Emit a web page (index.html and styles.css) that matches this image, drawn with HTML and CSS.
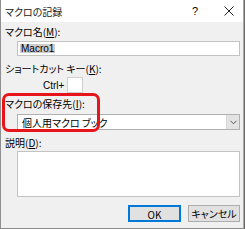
FILE: index.html
```html
<!DOCTYPE html>
<html lang="ja">
<head>
    <meta charset="UTF-8">
    <title>マクロの記録</title>
    <link rel="stylesheet" href="styles.css">
</head>
<body>
    <div class="window">
        <div class="titlebar">
            <span class="title">マクロの記録</span>
            <span class="help">?</span>
            <span class="close">
                <svg width="10" height="10" viewBox="0 0 10 10"><path d="M0.5 0.5L9.5 9.5M9.5 0.5L0.5 9.5" stroke="#222" stroke-width="1" fill="none"/></svg>
            </span>
        </div>
        <div class="content">
            <div class="label first">マクロ名(<u>M</u>):</div>
            <div class="textbox name"><span class="sel">Macro1</span></div>

            <div class="label second">ショートカット キー(<u>K</u>):</div>
            <div class="shortcut">
                <span class="ctrl">Ctrl+</span>
                <div class="keybox"></div>
            </div>

            <div class="label third">マクロの保存先(<u>I</u>):</div>
            <div class="combo">
                <span class="combo-text">個人用マクロ ブック</span>
                <span class="combo-btn">
                    <svg width="7" height="5" viewBox="0 0 7 5"><path d="M0.5 0.8L3.5 3.8L6.5 0.8" stroke="#555" stroke-width="1" fill="none"/></svg>
                </span>
            </div>

            <div class="label fourth">説明(<u>D</u>):</div>
            <div class="textbox memo"></div>

            <div class="buttons">
                <button class="btn default">OK</button>
                <button class="btn">キャンセル</button>
            </div>

            <!-- callout around the save location -->
            <div class="callout"></div>
        </div>
    </div>
</body>
</html>
```

FILE: styles.css
```css
body {
    margin: 0;
    background-color: #6e6c60;
    font-family: "Noto Sans CJK JP", "Noto Sans", sans-serif;
    font-size: 10px;
    font-feature-settings: "palt";
    color: #000;
}

.window {
    width: 242px;
    border-left: 1px solid #8f8f8f;
    border-right: 1px solid #a9a9a0;
    border-bottom: 1px solid #8a8a8a;
    background-color: #f0f0f0;
}

.titlebar {
    height: 22px;
    background-color: #fff;
    display: flex;
    align-items: center;
    position: relative;
}

.title {
    margin-left: 4px;
    font-size: 10px;
    color: #222;
}

.help {
    margin-left: auto;
    margin-right: 26px;
    font-family: "Liberation Sans", sans-serif;
    font-size: 11px;
}

.close {
    display: flex;
    margin-right: 9px;
}

.content {
    position: relative;
    padding: 0 2px 6px 4px;
}

.label {
    height: 14px;
    line-height: 14px;
}

.label u {
    text-decoration-thickness: 1px;
    text-underline-offset: 1px;
}

.first {
    padding-top: 3px;
}

.second {
    margin-top: 6px;
}

.third {
    margin-top: 4px;
}

.fourth {
    margin-top: 6px;
}

.textbox {
    margin-left: 12px;
    width: 223px;
    box-sizing: border-box;
    background-color: #fff;
    border: 1px solid #c3c3c3;
}

.name {
    margin-top: 2px;
    height: 15px;
    display: flex;
    align-items: center;
    padding-left: 2px;
}

.sel {
    background-color: #cccccc;
    font-family: "Liberation Sans", sans-serif;
    font-size: 10px;
    line-height: 9px;
    padding: 0 1px;
}

.shortcut {
    margin-top: 1px;
    display: flex;
    align-items: center;
    height: 16px;
}

.ctrl {
    margin-left: 38px;
    width: 24px;
    font-family: "Liberation Sans", sans-serif;
    font-size: 10px;
}

.keybox {
    width: 16px;
    height: 16px;
    box-sizing: border-box;
    background-color: #fff;
    border: 1px solid #d0d0d0;
}

.combo {
    margin-top: 3px;
    margin-left: 12px;
    width: 223px;
    height: 16px;
    box-sizing: border-box;
    background-color: #fff;
    border: 1px solid #b0b0b0;
    display: flex;
    align-items: center;
}

.combo-text {
    margin-left: 4px;
}

.combo-btn {
    margin-left: auto;
    width: 12px;
    height: 14px;
    background-color: #e3e3e3;
    border-left: 1px solid #d6d6d6;
    display: flex;
    align-items: center;
    justify-content: center;
}

.memo {
    margin-top: 1px;
    height: 46px;
}

.buttons {
    margin-top: 8px;
    display: flex;
    justify-content: flex-end;
    gap: 7px;
    padding-right: 1px;
}

.btn {
    width: 52px;
    height: 17px;
    box-sizing: border-box;
    background-color: #e1e1e1;
    border: 1px solid #adadad;
    font-family: "Noto Sans CJK JP", "Noto Sans", sans-serif;
    font-size: 10px;
    font-feature-settings: "palt";
    padding: 0;
    color: #000;
}

.default {
    width: 53px;
    border: 2px solid #0078d7;
}

.callout {
    position: absolute;
    left: 1px;
    top: 71px;
    width: 98px;
    height: 39px;
    box-sizing: border-box;
    border: 3px solid #e8141b;
    border-radius: 7px;
}
```
